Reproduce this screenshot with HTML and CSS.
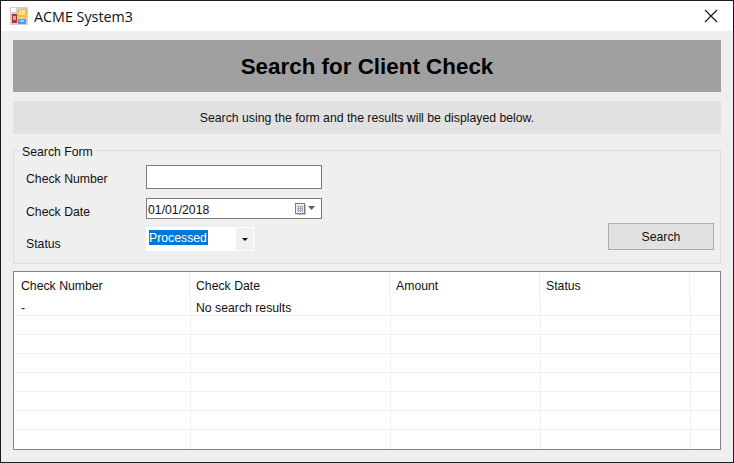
FILE: index.html
```html
<!DOCTYPE html>
<html lang="en">
<head>
    <meta charset="UTF-8" />
    <title>ACME System3</title>
    <link rel="stylesheet" href="styles.css">
</head>
<body>

<div class="window">
    <div class="titlebar">
        <svg class="app-icon" width="18" height="18" viewBox="0 0 18 18">
            <rect width="18" height="18" fill="#cfcfcf"/>
            <rect x="1" y="1" width="5" height="4" fill="#fff"/>
            <rect x="2" y="7" width="5" height="9" fill="#b8322e"/>
            <rect x="3" y="9" width="3" height="4" fill="#e8a09a"/>
            <rect x="8" y="2" width="9" height="8" fill="#f0c030"/>
            <rect x="9" y="3" width="6" height="5" fill="#fbe08a"/>
            <rect x="8" y="12" width="8" height="5" fill="#5f96e0"/>
            <rect x="10" y="13" width="4" height="2" fill="#a9cdf5"/>
        </svg>
        <span class="title">ACME System3</span>
        <svg class="close-x" width="14" height="14" viewBox="0 0 14 14">
            <path d="M1 1 L13 13 M13 1 L1 13" stroke="#111" stroke-width="1.1" fill="none"/>
        </svg>
    </div>

    <div class="content">
        <h1 class="banner">Search for Client Check</h1>
        <p class="info">Search using the form and the results will be displayed below.</p>

        <fieldset class="search-form">
            <legend>Search Form</legend>
            <div class="fields">
                <div class="field field-number">
                    <label>Check Number</label>
                    <div class="text-box"></div>
                </div>
                <div class="field field-date">
                    <label>Check Date</label>
                    <div class="text-box date-box">
                        <span class="date-value">01/01/2018</span>
                        <svg class="cal" width="21" height="12" viewBox="0 0 21 12">
                            <rect x="0.5" y="0.5" width="9" height="10" fill="#eceef4" stroke="#7c7c7c"/>
                            <path d="M2 3.5 H8 M2 5.5 H8 M2 7.5 H8 M3.5 3 V9 M5.5 3 V9 M7.5 3 V9" stroke="#a4a8b8" stroke-width="1"/>
                            <path d="M10.5 2 V11.5 H2" stroke="#bdbdbd" fill="none"/>
                            <path d="M13 3 H20 L16.5 7 Z" fill="#4a5f8c"/>
                        </svg>
                    </div>
                </div>
                <div class="field field-status">
                    <label>Status</label>
                    <div class="combo">
                        <span class="combo-value"><span class="selected">Processed</span></span>
                        <span class="combo-btn"></span>
                    </div>
                </div>
            </div>
            <button class="search-btn" type="button">Search</button>
        </fieldset>

        <div class="results">
            <div class="grid-head">
                <div class="col-1">Check Number</div>
                <div class="col-2">Check Date</div>
                <div class="col-3">Amount</div>
                <div class="col-4">Status</div>
                <div class="col-5"></div>
            </div>
            <div class="grid-row">
                <div class="col-1">-</div>
                <div class="col-2">No search results</div>
                <div class="col-3"></div>
                <div class="col-4"></div>
                <div class="col-5"></div>
            </div>
            <div class="grid-row"><div class="col-1"></div><div class="col-2"></div><div class="col-3"></div><div class="col-4"></div><div class="col-5"></div></div>
            <div class="grid-row"><div class="col-1"></div><div class="col-2"></div><div class="col-3"></div><div class="col-4"></div><div class="col-5"></div></div>
            <div class="grid-row"><div class="col-1"></div><div class="col-2"></div><div class="col-3"></div><div class="col-4"></div><div class="col-5"></div></div>
            <div class="grid-row"><div class="col-1"></div><div class="col-2"></div><div class="col-3"></div><div class="col-4"></div><div class="col-5"></div></div>
            <div class="grid-row"><div class="col-1"></div><div class="col-2"></div><div class="col-3"></div><div class="col-4"></div><div class="col-5"></div></div>
            <div class="grid-row"><div class="col-1"></div><div class="col-2"></div><div class="col-3"></div><div class="col-4"></div><div class="col-5"></div></div>
            <div class="grid-row last"><div class="col-1"></div><div class="col-2"></div><div class="col-3"></div><div class="col-4"></div><div class="col-5"></div></div>
        </div>
    </div>
</div>

</body>
</html>
```

FILE: styles.css
```css
* { box-sizing: border-box; }
html, body { margin: 0; height: 100%; }
body {
    font-family: "Liberation Sans", Arial, sans-serif;
    font-size: 12.25px;
    color: #111;
    background: #efefef;
}
.window {
    width: 734px;
    height: 463px;
    border: 1px solid #1c1c1c;
    display: flex;
    flex-direction: column;
    overflow: hidden;
}

/* title bar */
.titlebar {
    height: 30px;
    flex: none;
    background: #fff;
    display: flex;
    align-items: center;
    padding: 0 15px 0 9px;
}
.app-icon { flex: none; margin-top: -1px; }
.title {
    font-family: "Open Sans", sans-serif;
    font-size: 14.3px;
    margin-left: 6px;
    flex: 1;
}
.close-x { flex: none; }

.content {
    flex: 1;
    padding: 9px 12px 0;
}
.banner {
    margin: 0;
    height: 52px;
    background: #a0a0a0;
    color: #000;
    font-size: 22.4px;
    font-weight: bold;
    line-height: 54px;
    text-align: center;
}
.info {
    margin: 9px 0 0;
    height: 33px;
    background: #e1e1e1;
    line-height: 35px;
    text-align: center;
}

/* form group */
.search-form {
    margin: 7px 0 0;
    padding: 0 6px 13px 12px;
    height: 123px;
    border: 1px solid #dcdcdc;
    display: flex;
    justify-content: space-between;
    align-items: flex-end;
    min-width: 0;
}
.search-form legend {
    padding: 4px 2px 0;
    margin-left: -6px;
    line-height: 15px;
}
.fields { flex: none; margin-bottom: -1px; }
.field { display: flex; }
.field label { width: 120px; flex: none; }
.field-number { align-items: center; height: 24px; }
.field-number label { padding-top: 4px; }
.field-date { align-items: center; height: 21px; margin-top: 9px; }
.field-date label { padding-top: 6px; }
.field-status { height: 24px; margin-top: 8px; }
.field-status label { padding-top: 10px; }
.text-box {
    width: 176px;
    height: 100%;
    background: #fff;
    border: 1px solid #7a7a7a;
}
.date-box {
    display: flex;
    align-items: center;
    justify-content: space-between;
    padding: 0 5px 0 1px;
}
.date-value { padding-top: 2px; }
.combo {
    width: 108px;
    height: 24px;
    background: #fff;
    border-top: 1px solid #fff;
    border-bottom: 1px solid #fff;
    display: flex;
}
.combo-value { flex: 1; padding: 2px 0 0 3px; }
.selected {
    display: block;
    width: 59px;
    height: 15px;
    line-height: 17px;
    background: #0078d7;
    color: #fff;
}
.combo-btn {
    width: 17px;
    margin-right: 1px;
    background: #f0f0f0;
    position: relative;
}
.combo-btn::after {
    content: "";
    position: absolute;
    left: 6px;
    top: 10px;
    border: 3px solid transparent;
    border-top-color: #000;
}
.search-btn {
    width: 106px;
    height: 27px;
    background: #e1e1e1;
    border: 1px solid #adadad;
    font: inherit;
    color: #111;
    padding: 1px 0 0;
}

/* results grid */
.results {
    margin-top: 7px;
    height: 179px;
    background: #fff;
    border: 1px solid #828290;
}
.grid-head, .grid-row { display: flex; }
.grid-head { height: 25px; line-height: 29px; }
.grid-row {
    height: 19px;
    margin-left: 1px;
    margin-right: 1px;
    line-height: 23px;
    border-bottom: 1px solid #f0f0f0;
}
.grid-row.last { border-bottom: none; }
.col-1, .col-2, .col-3, .col-4 {
    flex: none;
    padding-left: 6px;
    border-right: 1px solid #f0f0f0;
}
.col-1 { width: 176px; }
.col-2 { width: 200px; }
.col-3, .col-4 { width: 150px; }
.grid-head .col-1 { padding-left: 7px; }
.grid-row .col-2 { padding-left: 5px; }
.col-5 { flex: 1; }
```
